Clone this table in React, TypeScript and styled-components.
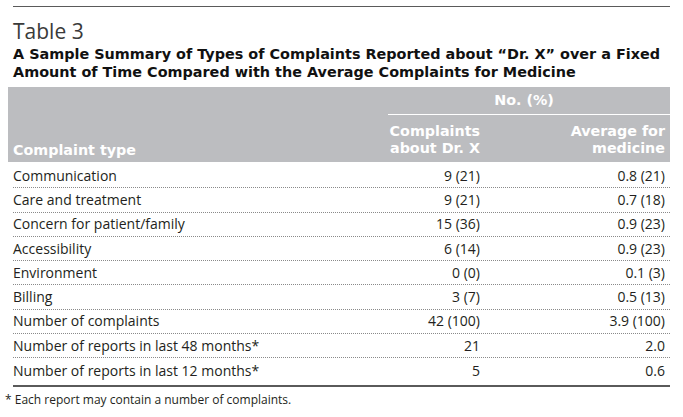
import React from "react";
import styled, { createGlobalStyle } from "styled-components";

const Global = createGlobalStyle`
  html, body { margin: 0; padding: 0; background: #fff; }
  body { font-family: "Open Sans", "Noto Sans", sans-serif; color: #231f20; }
`;

const boldFont = `"DejaVu Sans", "Open Sans", sans-serif`;

const Page = styled.div`
  width: 683px;
  height: 417px;
  box-sizing: border-box;
  padding: 6px 13px 0 13px;
`;

const TopRule = styled.div`
  height: 1px;
  background: #5a5a5a;
`;

const Title = styled.h1`
  margin: 0;
  padding-top: 10px;
  font-size: 21px;
  line-height: 28px;
  font-weight: 400;
  color: #3a3a3a;
`;

const Subtitle = styled.h2`
  margin: 0;
  font-family: ${boldFont};
  font-size: 14.4px;
  line-height: 18px;
  font-weight: 700;
  color: #111;
  white-space: nowrap;
`;

const Head = styled.div`
  margin: 6px 0 0 -5px;
  padding-left: 5px;
  height: 75px;
  box-sizing: border-box;
  background: #bcbdc0;
  color: #fff;
  font-family: ${boldFont};
  font-weight: 700;
  font-size: 14.3px;
  display: grid;
  grid-template-columns: 1fr 282px;
`;

const HeadLabel = styled.div`
  align-self: end;
  padding-bottom: 3px;
  line-height: 17px;
`;

const Group = styled.div`
  display: grid;
  grid-template-rows: 28px 1fr;
`;

const GroupTitle = styled.div`
  border-bottom: 1px solid #fff;
  text-align: center;
  line-height: 26px;
  padding-right: 10px;
`;

const SubCols = styled.div`
  display: grid;
  grid-template-columns: 92px 185px;
  padding-right: 5px;
  align-items: end;
  padding-bottom: 5px;
`;

const SubCol = styled.div`
  text-align: right;
  line-height: 17px;
  white-space: nowrap;
`;

const Body = styled.div`
  padding-top: 2px;
  font-size: 14px;
`;

const Row = styled.div<{ $last?: boolean }>`
  display: grid;
  grid-template-columns: 1fr 150px 185px;
  padding-right: 5px;
  height: 24.3px;
  box-sizing: border-box;
  align-items: center;
  border-bottom: ${(p) => (p.$last ? "none" : "1px dotted #8a8a8a")};
`;

const Cell = styled.div<{ $num?: boolean }>`
  text-align: ${(p) => (p.$num ? "right" : "left")};
  line-height: 18px;
  white-space: nowrap;
`;

const BottomRule = styled.div`
  margin-top: 2px;
  height: 2px;
  background: #5a5a5a;
`;

const Footnote = styled.div`
  margin: 5px 0 0 -8px;
  font-size: 12px;
  line-height: 16px;
  color: #231f20;
`;

const rows: [string, string, string][] = [
  ["Communication", "9 (21)", "0.8 (21)"],
  ["Care and treatment", "9 (21)", "0.7 (18)"],
  ["Concern for patient/family", "15 (36)", "0.9 (23)"],
  ["Accessibility", "6 (14)", "0.9 (23)"],
  ["Environment", "0 (0)", "0.1 (3)"],
  ["Billing", "3 (7)", "0.5 (13)"],
  ["Number of complaints", "42 (100)", "3.9 (100)"],
  ["Number of reports in last 48 months*", "21", "2.0"],
  ["Number of reports in last 12 months*", "5", "0.6"],
];

export default function App() {
  return (
    <Page>
      <Global />
      <TopRule />
      <Title>Table 3</Title>
      <Subtitle>
        A Sample Summary of Types of Complaints Reported about “Dr. X” over a Fixed
        <br />
        Amount of Time Compared with the Average Complaints for Medicine
      </Subtitle>
      <Head>
        <HeadLabel>Complaint type</HeadLabel>
        <Group>
          <GroupTitle>No. (%)</GroupTitle>
          <SubCols>
            <SubCol>
              Complaints
              <br />
              about Dr. X
            </SubCol>
            <SubCol>
              Average for
              <br />
              medicine
            </SubCol>
          </SubCols>
        </Group>
      </Head>
      <Body>
        {rows.map((r, i) => (
          <Row key={r[0]} $last={i === rows.length - 1}>
            <Cell>{r[0]}</Cell>
            <Cell $num>{r[1]}</Cell>
            <Cell $num>{r[2]}</Cell>
          </Row>
        ))}
      </Body>
      <BottomRule />
      <Footnote>* Each report may contain a number of complaints.</Footnote>
    </Page>
  );
}
